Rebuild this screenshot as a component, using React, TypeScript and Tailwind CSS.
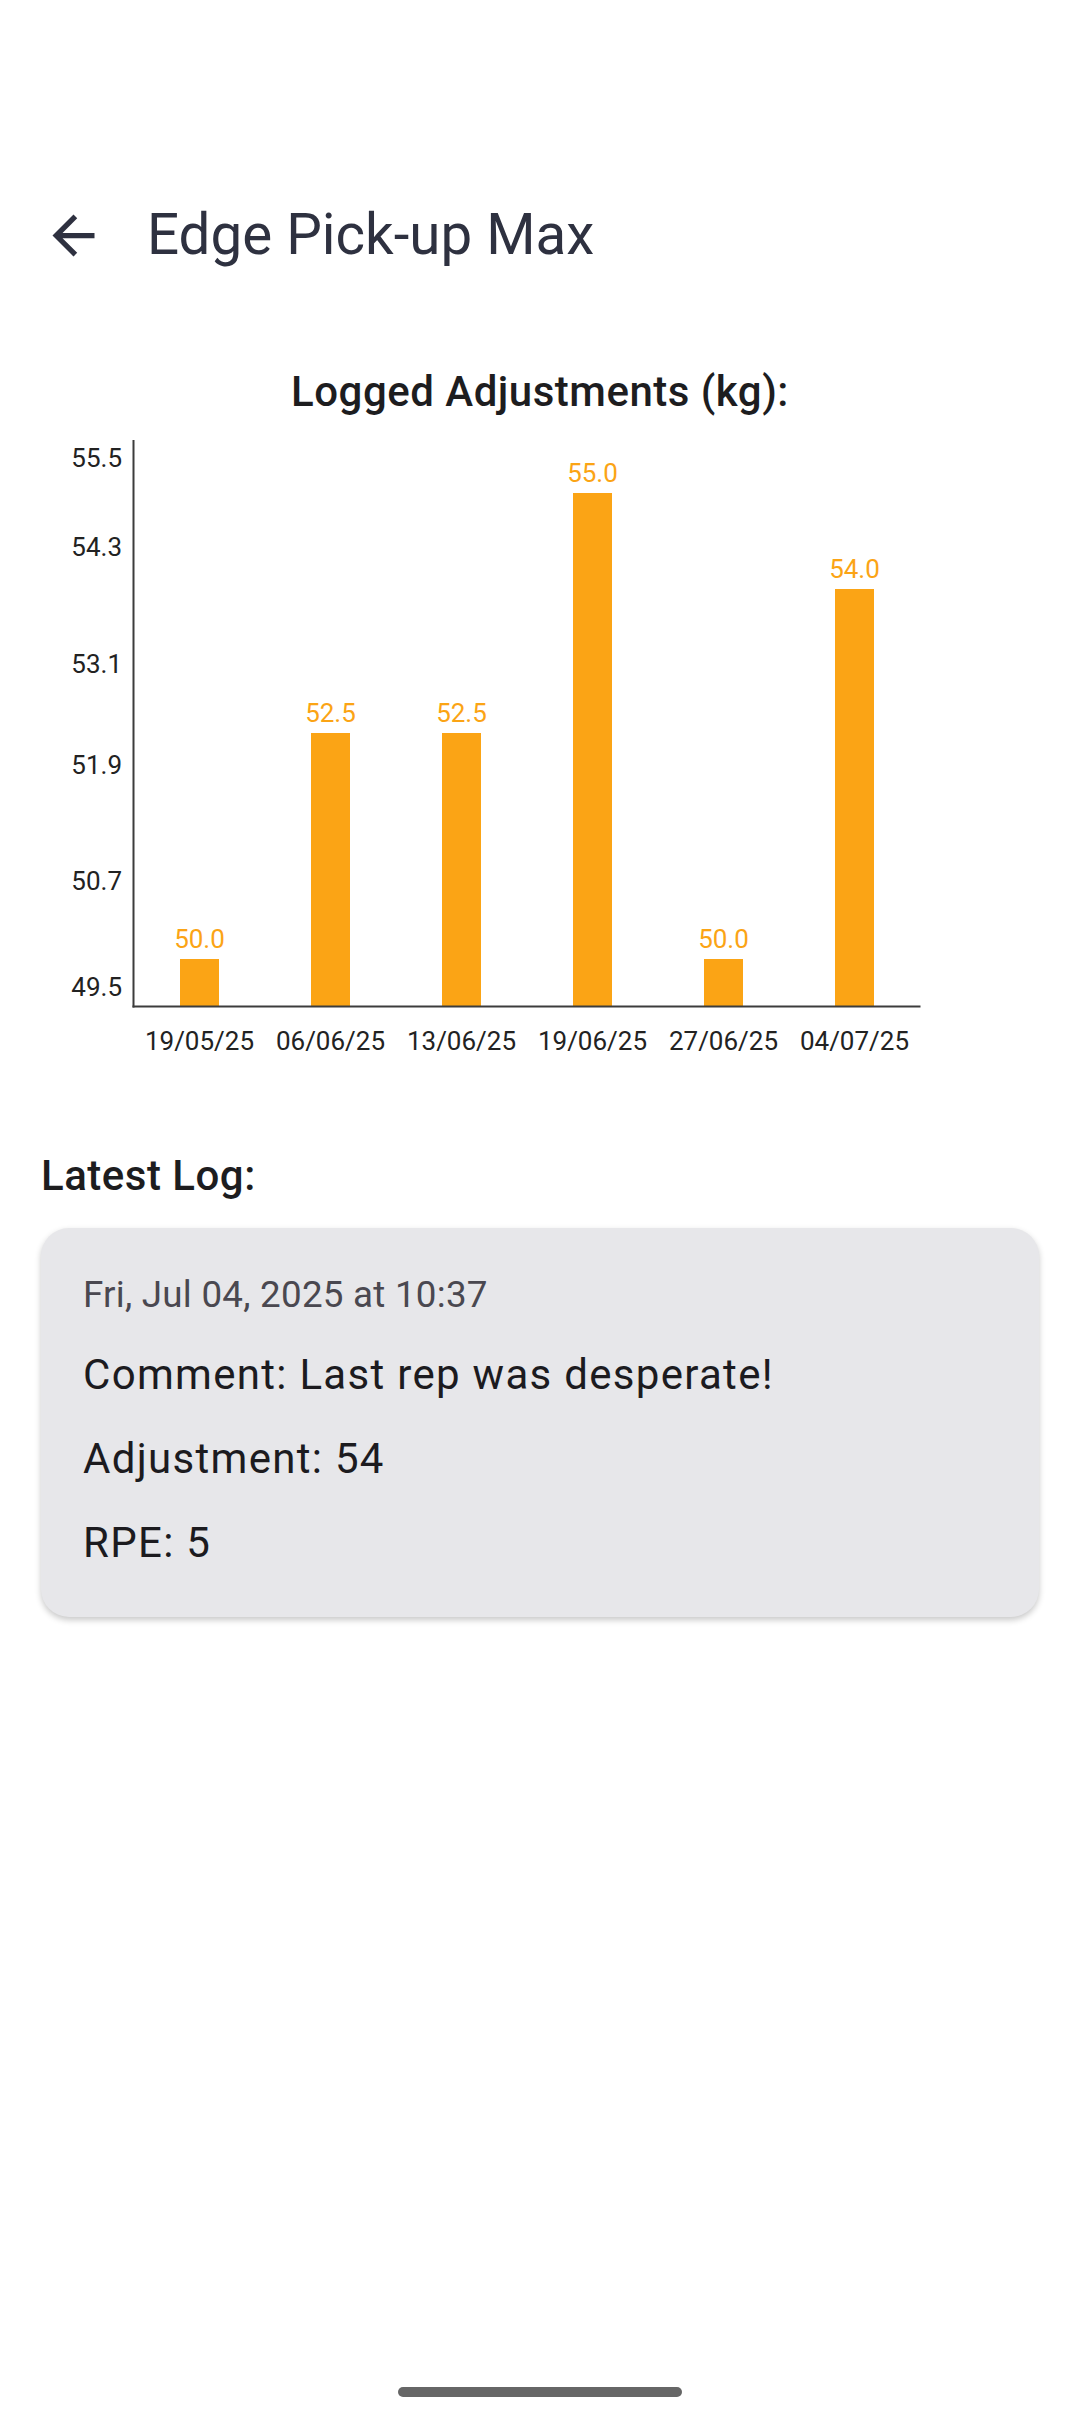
import React from "react";

const bars = [
  { label: "19/05/25", value: "50.0", top: 968 },
  { label: "06/06/25", value: "52.5", top: 742 },
  { label: "13/06/25", value: "52.5", top: 742 },
  { label: "19/06/25", value: "55.0", top: 502 },
  { label: "27/06/25", value: "50.0", top: 968 },
  { label: "04/07/25", value: "54.0", top: 598 },
];

const yLabels = [
  { t: "55.5", c: 467 },
  { t: "54.3", c: 556 },
  { t: "53.1", c: 673 },
  { t: "51.9", c: 774 },
  { t: "50.7", c: 890 },
  { t: "49.5", c: 996 },
];

const ORANGE = "#FBA415";
const AXIS_Y = 1015.5;

function Chart() {
  return (
    <svg
      width={1080}
      height={652}
      viewBox="0 432 1080 652"
      style={{ fontFamily: "Roboto, 'Noto Sans', sans-serif", display: "block" }}
    >
      {/* y axis */}
      <line x1={133.5} y1={449} x2={133.5} y2={AXIS_Y + 1} stroke="#3c3c3c" strokeWidth={2} />
      {yLabels.map((y) => (
        <text key={y.t} x={122} y={y.c + 9} textAnchor="end" fontSize={26} fill="#222222">
          {y.t}
        </text>
      ))}
      {bars.map((b, i) => {
        const cx = 199.5 + 131 * i;
        return (
          <g key={i}>
            <rect x={cx - 19.5} y={b.top} width={39} height={AXIS_Y - b.top} fill={ORANGE} />
            <text x={cx} y={b.top - 11} textAnchor="middle" fontSize={26} fill={ORANGE}>
              {b.value}
            </text>
            <text x={cx} y={1059} textAnchor="middle" fontSize={26} fill="#222222">
              {b.label}
            </text>
          </g>
        );
      })}
      {/* x axis */}
      <line x1={132.5} y1={AXIS_Y} x2={920.5} y2={AXIS_Y} stroke="#3c3c3c" strokeWidth={2} />
    </svg>
  );
}

export default function App() {
  return (
    <div
      className="relative w-[1080px] h-[2424px] bg-white overflow-hidden"
      style={{ fontFamily: "Roboto, 'Noto Sans', sans-serif" }}
    >
      {/* status bar spacer */}
      <div className="h-[151px]" />
      {/* top app bar */}
      <div className="h-[168px] flex items-center">
        <div className="w-[147px] flex items-center justify-center pl-[2px]">
          <svg width="63" height="63" viewBox="0 0 24 24" className="ml-[-2px]">
            <path
              d="M20 11H7.83l5.59-5.59L12 4l-8 8 8 8 1.41-1.41L7.83 13H20v-2z"
              fill="#2E3140"
            />
          </svg>
        </div>
        <div className="text-[56.5px] leading-[72px] text-[#2E3140]">Edge Pick-up Max</div>
      </div>

      {/* chart title */}
      <div className="mt-[41px] text-center text-[42px] leading-[63px] font-medium text-[#1D1D1F] tracking-[0.5px]">
        Logged Adjustments (kg):
      </div>

      <Chart />

      <div className="px-[41px]">
        <div className="mt-[69px] text-[42px] leading-[63px] font-medium text-[#1D1D1F] tracking-[0.5px]">
          Latest Log:
        </div>
        <div className="mt-[21px] rounded-[28px] bg-[#E7E7EA] shadow-[0_3px_6px_rgba(0,0,0,0.22)] pt-[41px] pb-[43px] px-[42px] flex flex-col gap-[21px]">
          <div className="text-[36.75px] leading-[52.5px] text-[#4A4850] tracking-[0.25px]">
            Fri, Jul 04, 2025 at 10:37
          </div>
          <div className="text-[42px] leading-[63px] text-[#1C1B1F] tracking-[1.3px]">
            Comment: Last rep was desperate!
          </div>
          <div className="text-[42px] leading-[63px] text-[#1C1B1F] tracking-[1.3px]">
            Adjustment: 54
          </div>
          <div className="text-[42px] leading-[63px] text-[#1C1B1F] tracking-[1.3px]">
            RPE: 5
          </div>
        </div>
      </div>

      {/* gesture handle */}
      <div className="absolute left-[398px] top-[2387px] w-[284px] h-[10px] rounded-full bg-[#666666]" />
    </div>
  );
}
